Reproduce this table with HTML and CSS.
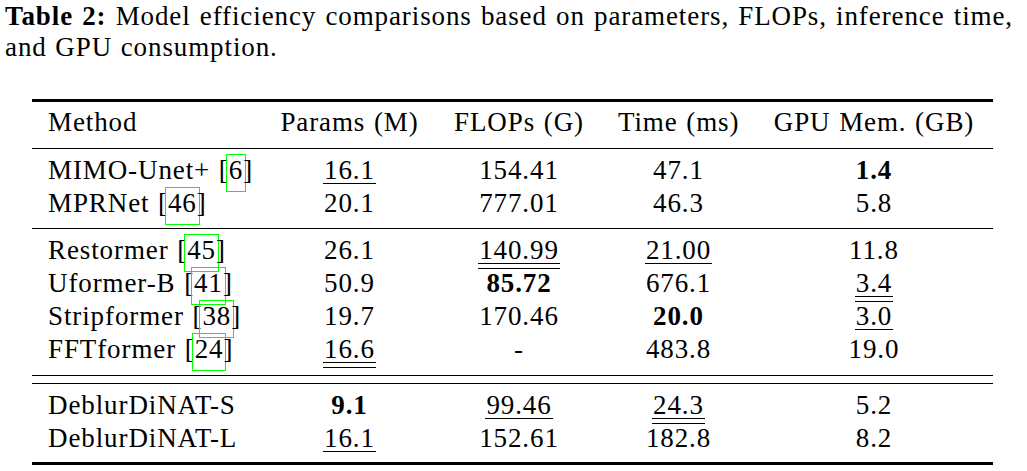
FILE: index.html
```html
<!DOCTYPE html>
<html lang="en">
<head>
<meta charset="utf-8">
<title>Table 2: Model efficiency comparisons</title>
<link rel="stylesheet" href="styles.css">
</head>
<body>
<main class="page">
  <p class="caption"><span class="caption-line"><b>Table 2:</b> Model efficiency comparisons based on parameters, FLOPs, inference time,</span> and GPU consumption.</p>
  <table class="results">
    <thead>
      <tr>
        <th class="col-method">Method</th>
        <th class="col-params">Params (M)</th>
        <th class="col-flops">FLOPs (G)</th>
        <th class="col-time">Time (ms)</th>
        <th class="col-mem">GPU Mem. (GB)</th>
      </tr>
    </thead>
    <tbody class="group">
      <tr><td>MIMO-Unet+ [<span class="ref">6</span>]</td><td><span class="u1">16.1</span></td><td>154.41</td><td>47.1</td><td><b>1.4</b></td></tr>
      <tr><td>MPRNet [<span class="ref">46</span>]</td><td>20.1</td><td>777.01</td><td>46.3</td><td>5.8</td></tr>
    </tbody>
    <tbody class="group group-prior">
      <tr><td>Restormer [<span class="ref">45</span>]</td><td>26.1</td><td><span class="u2">140.99</span></td><td><span class="u1">21.00</span></td><td>11.8</td></tr>
      <tr><td>Uformer-B [<span class="ref">41</span>]</td><td>50.9</td><td><b>85.72</b></td><td>676.1</td><td><span class="u2">3.4</span></td></tr>
      <tr><td>Stripformer [<span class="ref">38</span>]</td><td>19.7</td><td>170.46</td><td><b>20.0</b></td><td><span class="u1">3.0</span></td></tr>
      <tr><td>FFTformer [<span class="ref">24</span>]</td><td><span class="u2">16.6</span></td><td>-</td><td>483.8</td><td>19.0</td></tr>
    </tbody>
    <tbody class="group group-ours">
      <tr><td>DeblurDiNAT-S</td><td><b>9.1</b></td><td><span class="u1">99.46</span></td><td><span class="u2">24.3</span></td><td>5.2</td></tr>
      <tr><td>DeblurDiNAT-L</td><td><span class="u1">16.1</span></td><td>152.61</td><td>182.8</td><td>8.2</td></tr>
    </tbody>
  </table>
</main>
</body>
</html>
```

FILE: styles.css
```css
html, body {
  margin: 0;
  padding: 0;
  background: #ffffff;
}

body {
  font-family: "Liberation Serif", "Times New Roman", serif;
  font-size: 27px;
  color: #000000;
  letter-spacing: 0.9px;
  word-spacing: 1px;
}

.page {
  display: block;
}

.caption {
  margin: 1px 14px 36px 5px;
  line-height: 31px;
  text-align: justify;
}

.caption-line {
  display: block;
  text-align: justify;
  text-align-last: justify;
}

.caption b {
  font-weight: bold;
}

.results {
  margin-left: 32px;
  width: 961px;
  table-layout: fixed;
  border-collapse: separate;
  border-spacing: 0;
}

.results th,
.results td {
  padding: 0 16px;
  line-height: 33px;
  font-weight: normal;
  white-space: nowrap;
  text-align: center;
}

.results th:first-child,
.results td:first-child {
  text-align: left;
}

.col-method { width: 199px; }
.col-params { width: 141px; }
.col-flops  { width: 134px; }
.col-time   { width: 121px; }
.col-mem    { width: 206px; }

.results thead th {
  border-top: 3px solid #000;
  border-bottom: 1px solid #000;
  padding-top: 4px;
  padding-bottom: 9px;
}

.results tbody tr:first-child td {
  padding-top: 5px;
}

.results tbody tr:last-child td {
  padding-bottom: 8px;
  border-bottom: 1px solid #000;
}

.results tbody.group-prior tr:last-child td {
  padding-bottom: 9px;
}

.results tbody.group-ours tr:first-child td {
  padding-top: 13px;
  background: linear-gradient(#000, #000) 0 7px / 100% 1px no-repeat;
}

.results tbody.group-ours tr:last-child td {
  padding-bottom: 7px;
  border-bottom: 3px solid #000;
}

.results b {
  font-weight: bold;
}

.ref {
  border: 1px solid #00ff00;
  padding: 0 2px 6px;
  margin: 0 -3px;
}

.u1 {
  background: linear-gradient(#000, #000) 0 28px / 100% 1px no-repeat;
  padding: 0 1px;
  margin: 0 -1px;
}

.u2 {
  background:
    linear-gradient(#000, #000) 0 28px / 100% 1px no-repeat,
    linear-gradient(#000, #000) 0 33px / 100% 1px no-repeat;
  padding: 0 1px 5px;
  margin: 0 -1px;
}
```
